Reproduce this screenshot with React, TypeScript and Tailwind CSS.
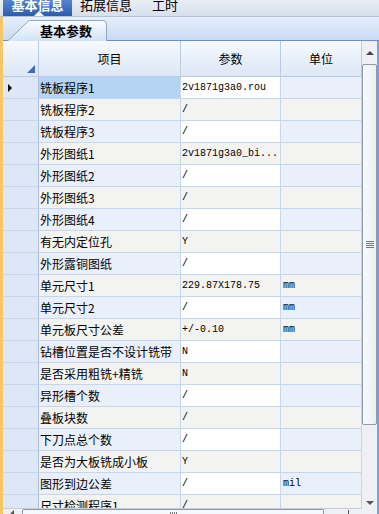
import React from "react";

const rows: [string, string, string][] = [
  ["铣板程序1", "2v1871g3a0.rou", ""],
  ["铣板程序2", "/", ""],
  ["铣板程序3", "/", ""],
  ["外形图纸1", "2v1871g3a0_bi...", ""],
  ["外形图纸2", "/", ""],
  ["外形图纸3", "/", ""],
  ["外形图纸4", "/", ""],
  ["有无内定位孔", "Y", ""],
  ["外形露铜图纸", "/", ""],
  ["单元尺寸1", "229.87X178.75", "mm"],
  ["单元尺寸2", "/", "mm"],
  ["单元板尺寸公差", "+/-0.10", "mm"],
  ["钻槽位置是否不设计铣带", "N", ""],
  ["是否采用粗铣+精铣", "N", ""],
  ["异形槽个数", "/", ""],
  ["叠板块数", "/", ""],
  ["下刀点总个数", "/", ""],
  ["是否为大板铣成小板", "Y", ""],
  ["图形到边公差", "/", "mil"],
  ["尺寸检测程序1", "/", ""],
];

const cjk = { fontFamily: '"Noto Sans CJK SC", "Noto Sans", sans-serif' };
const mono = { fontFamily: '"Liberation Mono", "DejaVu Sans Mono", monospace', color: "#000" };

export default function App() {
  return (
    <div className="relative w-[379px] h-[514px] overflow-hidden bg-[#eef2f8]" style={cjk}>
      {/* top tab bar */}
      <div className="flex h-[17px] bg-gradient-to-b from-[#e9eef5] to-[#d6e0ec] border-b border-[#b4c3d6]">
        <div className="relative ml-[3px] w-[69px] h-[16px] bg-gradient-to-b from-[#5585cf] to-[#2c5cae] flex justify-center overflow-hidden">
          <span className="text-white font-bold text-[13px] leading-[13px] -mt-[2px]">基本信息</span>
          <div className="absolute left-[31px] bottom-0 w-0 h-0 border-l-[5px] border-r-[5px] border-b-[5px] border-l-transparent border-r-transparent border-b-white" />
        </div>
        <span className="ml-[8px] text-[13px] leading-[13px] -mt-[2px] text-black">拓展信息</span>
        <span className="ml-[20px] text-[13px] leading-[13px] -mt-[2px] text-black">工时</span>
      </div>

      <div className="flex h-[497px]">
        <div className="w-[3px] bg-[#f3c768]" />
        <div className="flex-1 flex flex-col">
          {/* second tab strip */}
          <div className="relative h-[23px] bg-gradient-to-b from-[#e6effb] to-[#c9dbf4]">
            <div className="absolute left-[4px] top-[3px] w-[100px] h-[21px]">
              <svg width="100" height="21" className="absolute inset-0">
                <defs>
                  <linearGradient id="tg" x1="0" y1="0" x2="0" y2="1">
                    <stop offset="0" stopColor="#fafcff" />
                    <stop offset="1" stopColor="#d3e2f6" />
                  </linearGradient>
                </defs>
                <path d="M0.5 21 L21 1.5 Q22 0.5 24 0.5 L96 0.5 Q99.5 0.5 99.5 4 L99.5 21" fill="url(#tg)" stroke="#8fa6c4" />
              </svg>
              <div className="relative flex justify-center pl-[18px] pt-[2px] text-[13px] leading-[17px] font-bold text-black">基本参数</div>
            </div>
          </div>
          <div className="h-[1px] bg-[#6b8fc9]" />

          <div className="flex flex-1 min-h-0">
            {/* table */}
            <div className="w-[359px] flex flex-col min-h-0">
              <div className="flex h-[36px] border-b border-[#b9cbe3] bg-gradient-to-b from-[#f6f9fd] to-[#dce7f6] text-[12px] text-black">
                <div className="relative w-[36px] border-r border-[#b9cbe3]">
                  <div className="absolute right-[3px] bottom-[3px] w-0 h-0" style={{ borderBottom: "8px solid #3b6cc0", borderLeft: "8px solid transparent" }} />
                </div>
                <div className="w-[142px] border-r border-[#b9cbe3] flex items-center justify-center">项目</div>
                <div className="w-[100px] border-r border-[#b9cbe3] flex items-center justify-center">参数</div>
                <div className="w-[81px] border-r border-[#b9cbe3] flex items-center justify-center">单位</div>
              </div>
              <div className="flex-1 min-h-0 overflow-hidden">
                {rows.map((r, i) => {
                  const odd = i % 2 === 1;
                  const c1 = i === 0 ? "bg-[#b5d3f3]" : odd ? "bg-[#f3f3f1]" : "bg-[#e9f0fb]";
                  const c2 = odd ? "bg-[#f3f3f1]" : "bg-white";
                  const c3 = odd ? "bg-[#f3f3f1]" : "bg-[#e9f0fb]";
                  return (
                    <div key={i} className="flex h-[22px] border-b border-[#c6d6ec] text-[12px] text-black">
                      <div className="w-[36px] bg-[#dde7f5] border-r border-[#a9bfdd] flex items-center pl-[5px]">
                        {i === 0 && (
                          <div className="w-0 h-0 border-t-[4px] border-b-[4px] border-l-[4px] border-t-transparent border-b-transparent border-l-black" />
                        )}
                      </div>
                      <div className={`w-[142px] ${c1} border-r border-[#c6d6ec] flex items-center pl-[1px] whitespace-nowrap overflow-hidden`}>{r[0]}</div>
                      <div className={`w-[100px] ${c2} border-r border-[#c6d6ec] flex items-center pl-[1px] text-[10px] whitespace-nowrap overflow-hidden`} style={mono}>{r[1]}</div>
                      <div className={`w-[81px] ${c3} border-r border-[#c6d6ec] flex items-center pl-[2px] text-[10px]`} style={mono}>{r[2]}</div>
                    </div>
                  );
                })}
              </div>
              {/* horizontal scrollbar */}
              <div className="h-[6px] flex bg-[#eef0f3] border-t border-[#c9ced6]">
                <div className="w-[19px] relative">
                  <div className="absolute left-[7px] top-[1px] w-0 h-0 border-t-[4px] border-b-[4px] border-r-[4px] border-t-transparent border-b-transparent border-r-[#555]" />
                </div>
                <div className="w-[302px] border-l border-r border-t border-[#8d98a8] bg-[#f7f8fa] rounded-t-[2px] flex justify-center">
                  <div className="flex gap-[1px] mt-[2px]">
                    <div className="w-[1px] h-[4px] bg-[#777]" />
                    <div className="w-[1px] h-[4px] bg-[#777]" />
                    <div className="w-[1px] h-[4px] bg-[#777]" />
                    <div className="w-[1px] h-[4px] bg-[#777]" />
                  </div>
                </div>
                <div className="flex-1 relative">
                  <div className="absolute left-[24px] top-[1px] w-[1px] h-[5px] bg-[#555]" />
                </div>
              </div>
            </div>

            {/* vertical scrollbar */}
            <div className="w-[15px] bg-[#eef0f3] flex flex-col">
              <div className="h-[23px] flex justify-center items-center">
                <div className="w-0 h-0 border-l-[4px] border-r-[4px] border-b-[4px] border-l-transparent border-r-transparent border-b-[#444]" />
              </div>
              <div className="h-[361px] border border-[#8d98a8] rounded-[2px] bg-gradient-to-r from-[#f8f9fb] to-[#eceef2] flex flex-col items-center justify-center gap-[1px]">
                <div className="w-[8px] h-[1px] bg-[#6f7885]" />
                <div className="w-[8px] h-[1px] bg-[#6f7885]" />
                <div className="w-[8px] h-[1px] bg-[#6f7885]" />
                <div className="w-[8px] h-[1px] bg-[#6f7885]" />
              </div>
              <div className="flex-1" />
              <div className="h-[22px] flex justify-center items-center">
                <div className="w-0 h-0 border-l-[4px] border-r-[4px] border-t-[4px] border-l-transparent border-r-transparent border-t-[#555]" />
              </div>
            </div>
            <div className="w-[2px] bg-[#7d9fd3]" />
          </div>
        </div>
      </div>
    </div>
  );
}
